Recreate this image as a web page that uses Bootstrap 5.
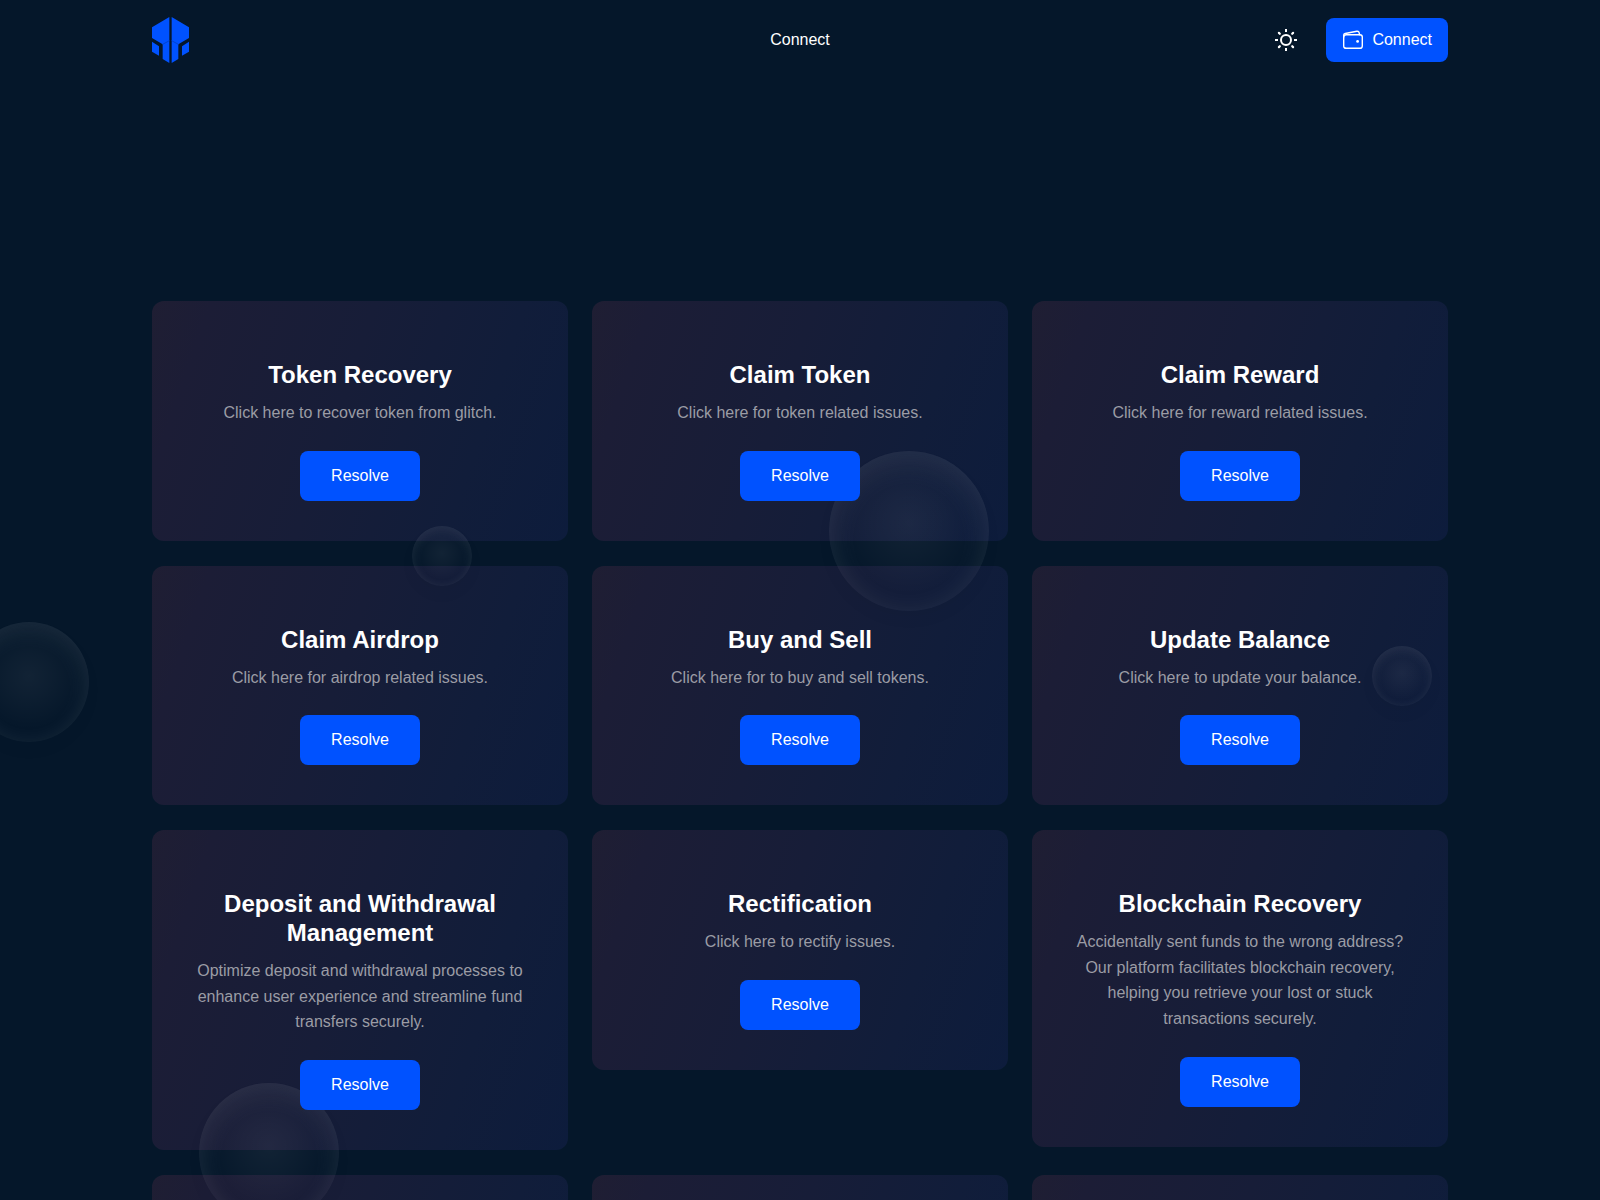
<!DOCTYPE html>
<html lang="en" data-bs-theme="dark">
<head>
<meta charset="utf-8">
<meta name="viewport" content="width=device-width, initial-scale=1">
<title>Connect</title>
<link href="https://cdn.jsdelivr.net/npm/bootstrap@5.3.0/dist/css/bootstrap.min.css" rel="stylesheet">
<style>
  body { background: #05172a; font-family: "Liberation Sans", Arial, sans-serif; line-height: 1.6; }
  .site-header { height: 80px; }
  .header-side { flex: 1 1 0; }
  .service-section { padding-top: 221px; }
  .service-grid { --bs-gutter-x: 24px; row-gap: 25px; }
  .service-card { min-height: 239px; padding: 59px 40px 40px; border-radius: 12px;
    background: linear-gradient(109deg, #1f1e33 0%, #1c1d36 12%, #171d38 45%, #111d3a 75%, #0d1c3c 100%); }
  .service-title { font-size: 24px; font-weight: 700; line-height: 29px; margin-bottom: 11px; color: #fff; }
  .service-text { color: #9b9ca5; margin-bottom: 25px; }
  .btn-brand { --bs-btn-bg: #0052ff; --bs-btn-color: #fff; --bs-btn-hover-bg: #0047dd; --bs-btn-hover-color: #fff;
    --bs-btn-active-bg: #003fc4; --bs-btn-border-width: 0; --bs-btn-border-radius: 8px; --bs-btn-line-height: 26px; }
  .btn-resolve { --bs-btn-padding-x: 31px; --bs-btn-padding-y: 12px; z-index: 2; }
  .btn-wallet { --bs-btn-padding-x: 16px; --bs-btn-padding-y: 9px; }
  .bubble { position: absolute; width: var(--size); height: var(--size); border-radius: 50%; z-index: 1; pointer-events: none;
    background: radial-gradient(circle at 50% 45%, rgba(255,255,255,.05) 0%, rgba(255,255,255,.03) 25%, rgba(255,255,255,0) 60%);
    box-shadow: inset 0 calc(var(--size) / 20) calc(var(--size) / 5) rgba(255,255,255,.1), 0 8px 16px rgba(0,0,0,.03); }
  .bubble-1 { --size: 160px; left: 829px; top: 451px; }
  .bubble-2 { --size: 60px; left: 412px; top: 526px; }
  .bubble-3 { --size: 120px; left: -31px; top: 622px; }
  .bubble-4 { --size: 60px; left: 1372px; top: 646px; }
  .bubble-5 { --size: 140px; left: 199px; top: 1083px; }
</style>
<script src="https://cdn.jsdelivr.net/npm/bootstrap@5.3.0/dist/js/bootstrap.bundle.min.js"></script>
</head>
<body>
<div class="position-relative vh-100 overflow-hidden">
  <header class="site-header container d-flex align-items-center">
    <div class="header-side d-flex">
      <a href="#" class="d-flex" aria-label="Home">
        <svg width="37" height="46" viewBox="0 0 111 138" fill="#0052ff" aria-hidden="true">
          <path d="M52 0 0 31V63L32 82V126L52 138ZM0 74 21 88V116L0 104Z"/>
          <path d="M59 0 111 31V63L79 82V126L59 138ZM111 74 90 88V116L111 104Z"/>
          <path d="M32 82 52 71M79 82 59 71" stroke="#0344cc" stroke-width="3" fill="none"/>
        </svg>
      </a>
    </div>
    <nav><a href="#" class="text-white text-decoration-none">Connect</a></nav>
    <div class="header-side d-flex justify-content-end align-items-center gap-4">
      <button type="button" class="btn border-0 p-1 d-flex text-white" aria-label="Toggle theme">
        <svg width="24" height="24" viewBox="0 0 24 24" fill="none" stroke="#fff" stroke-width="2" stroke-linecap="round" aria-hidden="true">
          <circle cx="12" cy="12" r="5"/>
          <path stroke-linecap="butt" d="M12 1v3M12 20v3M1 12h3M20 12h3"/>
          <path d="M4.9 4.9l.9.9M18.2 18.2l.9.9M4.9 19.1l.9-.9M18.2 5.8l.9-.9" stroke-width="2.2"/>
        </svg>
      </button>
      <button type="button" class="btn btn-brand btn-wallet d-flex align-items-center gap-2">
        <svg width="22" height="22" viewBox="0 0 22 22" fill="none" stroke="#fff" stroke-width="1.4" stroke-linejoin="round" stroke-linecap="round" aria-hidden="true">
          <rect x="1.7" y="5.7" width="18.6" height="13.6" rx="2.4"/>
          <path d="M1.7 8V6Q1.7 4.8 3.2 4.5L14.8 2.3Q16.8 2 17.2 3.8L17.6 5.7"/>
          <circle cx="15.6" cy="12.4" r="1.4" fill="#fff" stroke="none"/>
        </svg>
        Connect
      </button>
    </div>
  </header>

  <main class="service-section container">
    <div class="service-grid row align-items-start text-center">
      <div class="col-4"><article class="service-card">
        <h2 class="service-title">Token Recovery</h2>
        <p class="service-text">Click here to recover token from glitch.</p>
        <button type="button" class="btn btn-brand btn-resolve position-relative">Resolve</button>
      </article></div>
      <div class="col-4"><article class="service-card">
        <h2 class="service-title">Claim Token</h2>
        <p class="service-text">Click here for token related issues.</p>
        <button type="button" class="btn btn-brand btn-resolve position-relative">Resolve</button>
      </article></div>
      <div class="col-4"><article class="service-card">
        <h2 class="service-title">Claim Reward</h2>
        <p class="service-text">Click here for reward related issues.</p>
        <button type="button" class="btn btn-brand btn-resolve position-relative">Resolve</button>
      </article></div>
      <div class="col-4"><article class="service-card">
        <h2 class="service-title">Claim Airdrop</h2>
        <p class="service-text">Click here for airdrop related issues.</p>
        <button type="button" class="btn btn-brand btn-resolve position-relative">Resolve</button>
      </article></div>
      <div class="col-4"><article class="service-card">
        <h2 class="service-title">Buy and Sell</h2>
        <p class="service-text">Click here for to buy and sell tokens.</p>
        <button type="button" class="btn btn-brand btn-resolve position-relative">Resolve</button>
      </article></div>
      <div class="col-4"><article class="service-card">
        <h2 class="service-title">Update Balance</h2>
        <p class="service-text">Click here to update your balance.</p>
        <button type="button" class="btn btn-brand btn-resolve position-relative">Resolve</button>
      </article></div>
      <div class="col-4"><article class="service-card">
        <h2 class="service-title">Deposit and Withdrawal Management</h2>
        <p class="service-text">Optimize deposit and withdrawal processes to enhance user experience and streamline fund transfers securely.</p>
        <button type="button" class="btn btn-brand btn-resolve position-relative">Resolve</button>
      </article></div>
      <div class="col-4"><article class="service-card">
        <h2 class="service-title">Rectification</h2>
        <p class="service-text">Click here to rectify issues.</p>
        <button type="button" class="btn btn-brand btn-resolve position-relative">Resolve</button>
      </article></div>
      <div class="col-4"><article class="service-card">
        <h2 class="service-title">Blockchain Recovery</h2>
        <p class="service-text">Accidentally sent funds to the wrong address? Our platform facilitates blockchain recovery, helping you retrieve your lost or stuck transactions securely.</p>
        <button type="button" class="btn btn-brand btn-resolve position-relative">Resolve</button>
      </article></div>
      <div class="col-4"><div class="service-card"></div></div>
      <div class="col-4"><div class="service-card"></div></div>
      <div class="col-4"><div class="service-card"></div></div>
    </div>
  </main>

  <div aria-hidden="true">
    <span class="bubble bubble-1"></span>
    <span class="bubble bubble-2"></span>
    <span class="bubble bubble-3"></span>
    <span class="bubble bubble-4"></span>
    <span class="bubble bubble-5"></span>
  </div>
</div>
</body>
</html>
